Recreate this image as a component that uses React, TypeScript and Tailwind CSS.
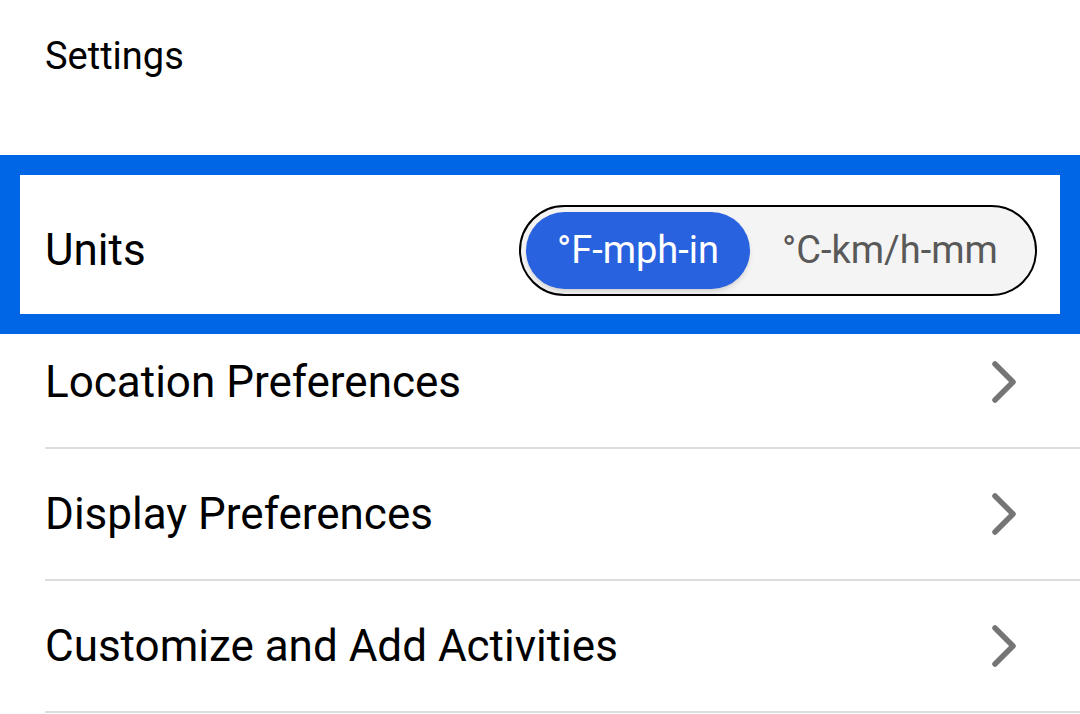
import { useState } from "react";

const rows = ["Location Preferences", "Display Preferences", "Customize and Add Activities"];

function Chevron() {
  return (
    <svg width="24" height="42" viewBox="0 0 24 42" fill="none">
      <polyline
        points="3,3 21,21 3,39"
        stroke="#757575"
        strokeWidth="5.5"
        strokeLinecap="round"
        strokeLinejoin="round"
      />
    </svg>
  );
}

export default function App() {
  const [metric, setMetric] = useState(false);

  return (
    <div className="w-[1080px] h-[714px] overflow-hidden bg-white text-black font-['Roboto',sans-serif]">
      {/* Header */}
      <div className="h-[185px] pl-[45px] pt-[37px]">
        <h1 className="text-[38px] leading-[38px]">Settings</h1>
      </div>

      {/* Units row, highlighted */}
      <div className="relative ml-[45px]">
        <div className="flex h-[130px] items-center justify-between pr-[43px]">
          <span className="text-[44px] leading-[44px]">Units</span>
          <div className="flex h-[91px] w-[518px] items-center rounded-full border-2 border-black bg-[#f4f4f4] p-[5px]">
            <button
              onClick={() => setMetric(false)}
              className={
                metric
                  ? "flex h-full w-[224px] items-center justify-center rounded-full text-[38px] text-[#595959]"
                  : "flex h-full w-[224px] items-center justify-center rounded-full bg-[#2962df] text-[38px] text-white shadow-md"
              }
            >
              °F-mph-in
            </button>
            <button
              onClick={() => setMetric(true)}
              className={
                metric
                  ? "flex h-full flex-1 items-center justify-center rounded-full bg-[#2962df] text-[38px] text-white shadow-md"
                  : "flex h-full flex-1 items-center justify-center rounded-full text-[38px] text-[#595959]"
              }
            >
              °C-km/h-mm
            </button>
          </div>
        </div>
        <div className="h-[2px] bg-[#dddddd]" />
        <div className="pointer-events-none absolute -top-[30px] -bottom-[17px] -left-[45px] right-0 border-[20px] border-[#0166e5]" />
      </div>

      {/* List rows */}
      <div className="ml-[45px]">
        {rows.map((label) => (
          <div key={label}>
            <div className="flex h-[130px] items-center justify-between pr-[64px]">
              <span className="text-[44px] leading-[44px]">{label}</span>
              <Chevron />
            </div>
            <div className="h-[2px] bg-[#dddddd]" />
          </div>
        ))}
      </div>
    </div>
  );
}
